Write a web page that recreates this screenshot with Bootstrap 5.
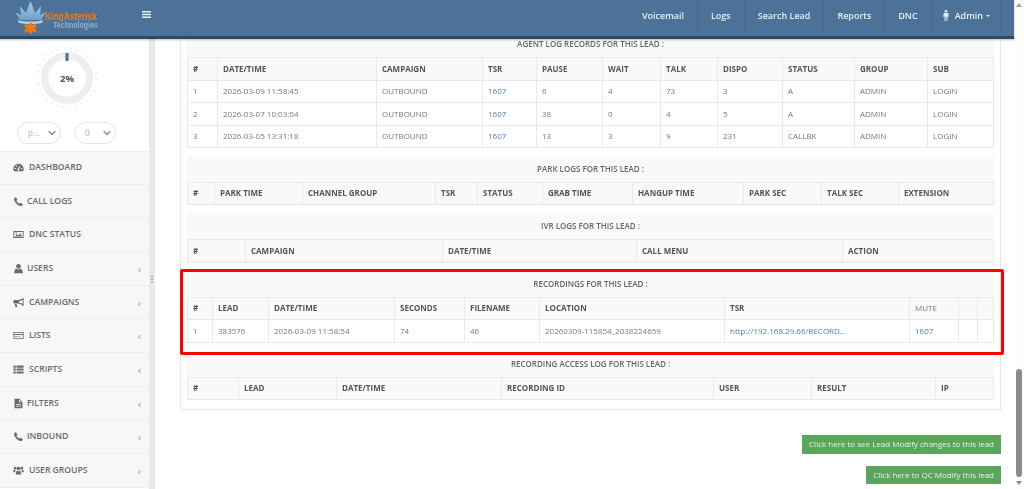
<!DOCTYPE html>
<html lang="en">
<head>
    <meta charset="UTF-8">
    <title>Lead Details</title>
    <link href="https://cdn.jsdelivr.net/npm/bootstrap@5.3.3/dist/css/bootstrap.min.css" rel="stylesheet">
    <style>
        html, body { height: 489px; overflow: hidden; }
        body { font-family: "Open Sans", "Liberation Sans", sans-serif; font-size: 8px; color: #777; background: #fff; }

        .app-shell { height: 489px; }
        .app-main { width: 1014px; }
        .app-scrollbar { width: 10px; background: #fdfdfd; }
        .scroll-up, .scroll-down { width: 0; height: 0; border-left: 3px solid transparent; border-right: 3px solid transparent; }
        .scroll-up { border-bottom: 4px solid #a0a0a0; margin-top: 3px; }
        .scroll-down { border-top: 4px solid #8a8a8a; margin-top: 4px; }
        .scroll-thumb { width: 6px; height: 108px; margin-top: 362px; background: #8c8c8c; border-radius: 3px; }

        .top-bar { height: 39px; padding: 0; background: #4c7299; border-bottom: 3px solid #2b4a60; box-shadow: 0 1px 2px rgba(0, 0, 0, .25); position: relative; z-index: 5; flex-wrap: nowrap; }
        .brand-box { width: 142px; height: 36px; }
        .menu-bars { width: 9px; height: 7px; margin-top: -8px; }
        .top-links { margin-right: 13px; height: 36px; align-items: flex-start; }
        .top-links .nav-link { height: 32px; padding: 0 13px; line-height: 32px; color: #e8edf2; font-size: 9px; font-weight: 600; border-right: 1px solid #466a8d; }
        .top-links .nav-link:hover { color: #fff; }
        .top-links .nav-item:last-child .nav-link { padding-right: 10px; }
        .top-links .dropdown-toggle::after { border-top-width: 2.5px; border-left-width: 2.5px; border-right-width: 2.5px; margin-left: 3px; }
        .man-icon { width: 6px; height: 11px; margin: 0 6px 0 -2px; vertical-align: -2px; }

        .side-panel { width: 149px; background: #fff; flex: none; }
        .gauge-box { width: 133px; }
        .gauge-svg { width: 70px; height: 70px; margin-top: 4px; }
        .pill-select { height: 22px; padding: 0 0 0 10px; font-family: "Liberation Serif", serif; font-size: 9.5px; color: #bbb; border: 1.5px solid #e6e6e6; border-radius: 11px; background-image: url("data:image/svg+xml,%3csvg xmlns='http://www.w3.org/2000/svg' viewBox='0 0 16 16'%3e%3cpath fill='none' stroke='%23888' stroke-width='2.5' stroke-linecap='round' stroke-linejoin='round' d='m2 5 6 6 6-6'/%3e%3c/svg%3e"); background-position: right 4px center; background-size: 8px 8px; min-height: 0; }
        .pill-a { width: 44px; }
        .pill-b { width: 42px; }
        .select-row { gap: 13px; margin-top: 9px; margin-bottom: 7px; }

        .side-menu { border-radius: 0; }
        .side-menu .list-group-item { height: 33.7px; padding: 0 8px 0 13px; background: #f7f7f7; border-color: #efefef; border-left: 0; border-right: 0; color: #6a6a6a; font-size: 8.6px; font-weight: 600; }
        .side-icon { width: 11px; height: 11px; fill: #6a6a6a; flex: none; }
        .side-label { margin-left: 5px; }
        .side-label.near-icon { margin-left: 3px; }
        .side-arrow { margin-left: auto; color: #999; font-size: 11px; font-weight: 400; line-height: 1; }

        .side-gutter { width: 6px; background: #e9e9e9; flex: none; padding-top: 236px; }
        .grip-dots { height: 8px; border-left: 2px dotted #b5b5b5; }

        .content-pane { padding: 0 13px 0 25px; overflow: hidden; will-change: transform; }
        .log-card { margin-top: -9px; padding: 0 6px 9px; border: 1px solid #e9e9e9; border-radius: 0; }
        .log-head { height: 26px; background: #f9f9f9; font-weight: 600; color: #666; }
        .log-block { margin-bottom: 8px; }
        .log-block:first-child { margin-bottom: 7.5px; }
        .log-block:last-child { margin-bottom: 0; }
        .log-table { table-layout: fixed; margin: 0; width: 100%; --bs-table-border-color: #e9e9e9; --bs-table-bg: #fff; --bs-table-color: #777; }
        .log-table th, .log-table td { padding: 0 5px; vertical-align: middle; font-size: 8px; white-space: nowrap; overflow: hidden; }
        .log-table th { height: 22.5px; background: #f9f9f9; --bs-table-bg: #f9f9f9; color: #555; font-weight: 700; }
        .log-table td { height: 22.5px; }
        .log-table a { color: #4d7fa8; text-decoration: none; }
        .log-table th.plain-head { font-weight: 400; color: #777; }

        #agent-log th:nth-child(1) { width: 30px; } #agent-log th:nth-child(2) { width: 159px; } #agent-log th:nth-child(3) { width: 106px; }
        #agent-log th:nth-child(4) { width: 54px; } #agent-log th:nth-child(5) { width: 66px; } #agent-log th:nth-child(6) { width: 58px; }
        #agent-log th:nth-child(7) { width: 57px; } #agent-log th:nth-child(8) { width: 65px; } #agent-log th:nth-child(9) { width: 72px; } #agent-log th:nth-child(10) { width: 73px; }

        #park-log th:nth-child(1) { width: 27px; } #park-log th:nth-child(2) { width: 88px; } #park-log th:nth-child(3) { width: 133px; }
        #park-log th:nth-child(4) { width: 42px; } #park-log th:nth-child(5) { width: 65px; } #park-log th:nth-child(6) { width: 90px; }
        #park-log th:nth-child(7) { width: 111px; } #park-log th:nth-child(8) { width: 78px; } #park-log th:nth-child(9) { width: 77px; }

        #ivr-log th:nth-child(1) { width: 58px; } #ivr-log th:nth-child(2) { width: 197px; } #ivr-log th:nth-child(3) { width: 194px; } #ivr-log th:nth-child(4) { width: 206px; }

        #rec-log th:nth-child(1) { width: 25px; } #rec-log th:nth-child(2) { width: 56px; } #rec-log th:nth-child(3) { width: 126px; } #rec-log th:nth-child(4) { width: 70px; }
        #rec-log th:nth-child(5) { width: 75px; } #rec-log th:nth-child(6) { width: 185px; } #rec-log th:nth-child(7) { width: 185px; } #rec-log th:nth-child(8) { width: 49px; } #rec-log th:nth-child(9) { width: 19px; }

        #access-log th:nth-child(1) { width: 51px; } #access-log th:nth-child(2) { width: 98px; } #access-log th:nth-child(3) { width: 165px; }
        #access-log th:nth-child(4) { width: 212px; } #access-log th:nth-child(5) { width: 98px; } #access-log th:nth-child(6) { width: 124px; }

        .rec-wrap { position: relative; }
        .red-frame { position: absolute; left: -7px; right: -10px; top: -2px; bottom: -12px; border: 3px solid #f00; border-radius: 2px; pointer-events: none; }

        .lead-btns { gap: 12px; margin-top: 25px; }
        .lead-btn { height: 18.5px; padding: 0 7px; font-size: 8px; line-height: 18px; color: #e6f3e6; background: #5aa65a; border: 0; border-radius: 0; }
    </style>
</head>
<body>

<svg width="0" height="0" class="position-absolute">
    <defs><linearGradient id="crown-fill" x1="0" y1="0" x2="0" y2="1"><stop offset="0" stop-color="#a9cfe8"/><stop offset="1" stop-color="#6f9fc6"/></linearGradient></defs>
    <symbol id="i-gauge" viewBox="0 0 14 14"><path fill-rule="evenodd" d="M7 2.2A6.6 6.6 0 0 0 .4 8.8c0 1.2.3 2.2.9 3.1h11.4c.6-.9.9-1.9.9-3.1A6.6 6.6 0 0 0 7 2.2zM3 9.2a1 1 0 1 1 0-2 1 1 0 0 1 0 2zm1.4-3.1a1 1 0 1 1 0-2 1 1 0 0 1 0 2zM7 11.1a1.5 1.5 0 0 1-.7-2.8l2-3.6.8.4-1.2 3.7A1.5 1.5 0 0 1 7 11.1zm4-1.9a1 1 0 1 1 0-2 1 1 0 0 1 0 2z"/></symbol>
    <symbol id="i-phone" viewBox="0 0 14 14"><path d="M3.6 1.6l2 3-1.2 1.5c.6 1.5 2 3 3.6 3.6l1.5-1.2 3 2c-.2 1.4-1.5 2.5-2.8 2.2C5.800 11.900 2.100 8.200 1.400 4.300 1.100 3 2.200 1.800 3.600 1.600z"/></symbol>
    <symbol id="i-image" viewBox="0 0 14 14"><path fill-rule="evenodd" d="M.5 2.500h13v9H.500zM1.700 3.700v6.600h10.600V3.700zM2.600 9.500l2.400-3 1.800 1.800 2.400-3 2.200 4.200zM4 6a1 1 0 1 1 0-2 1 1 0 0 1 0 2z"/></symbol>
    <symbol id="i-user" viewBox="0 0 14 14"><circle cx="7" cy="4.200" r="3"/><path d="M1.500 13c0-3.600 1.300-5.500 3-5.700.7.600 1.500.9 2.500.9s1.800-.3 2.500-.9c1.700.2 3 2.100 3 5.700z"/></symbol>
    <symbol id="i-horn" viewBox="0 0 14 14"><path fill-rule="evenodd" d="M13.500 1.500v9.500l-.8.300C11 9.500 9 8.500 6.500 8.200H1.500a1 1 0 0 1-1-1V4.800a1 1 0 0 1 1-1h5c2.500-.3 4.500-1.300 6.200-2.600zM12.300 3.400C10.900 4.300 9.200 5 7.500 5.200v1.800c1.700.2 3.400.9 4.800 1.800zM2.200 8.800h2.300l1 4.200H3.300z"/></symbol>
    <symbol id="i-card" viewBox="0 0 14 14"><path fill-rule="evenodd" d="M.5 2.500h13v9H.500zM1.500 3.500v1.500h11V3.500zM1.500 6.500v4h11v-4zM2.500 8h3v1h-3zM7 8h2v1H7z"/></symbol>
    <symbol id="i-rows" viewBox="0 0 14 14"><path d="M.5 2h3v2.700h-3zM4.500 2h9v2.700h-9zM.5 5.700h3v2.700h-3zM4.500 5.700h9v2.700h-9zM.5 9.400h3v2.700h-3zM4.500 9.400h9v2.700h-9z"/></symbol>
    <symbol id="i-file" viewBox="0 0 14 14"><path fill-rule="evenodd" d="M2 1h6l4 4v8H2zM7.500 2.300V5.500h3.200zM4 7.500v1h6v-1zM4 9.800v1h6v-1z"/></symbol>
    <symbol id="i-users" viewBox="0 0 14 14"><circle cx="7" cy="4.500" r="2.300"/><circle cx="2.800" cy="4" r="1.700"/><circle cx="11.200" cy="4" r="1.700"/><path d="M3.500 12c0-3 1-4.500 2-4.700.5.300 1 .5 1.500.5s1-.2 1.500-.5c1 .2 2 1.700 2 4.700zM.2 9.300c0-2 .7-3.200 1.400-3.300.4.300.8.400 1.300.4.200 0 .4 0 .6-.1-.5.800-.9 1.700-1 3zM13.800 9.300c0-2-.7-3.200-1.400-3.300-.4.300-.8.400-1.300.4-.2 0-.4 0-.6-.1.500.8.900 1.700 1 3z"/></symbol>
</svg>

<div class="app-shell d-flex">
    <div class="app-main d-flex flex-column">
        <nav class="navbar top-bar justify-content-between">
            <div class="d-flex align-items-center">
                <div class="brand-box">
                    <svg width="140" height="36" viewBox="0 0 140 36">
                        <path d="M15 12l6 3-1-9 6 7 4.500-12 4.500 12 6-7-1 9 6-3-5 8H20z" fill="url(#crown-fill)"/>
                        <path d="M18 20c5 2 20 2 25 0l-.5 2.500c-6 2-18 2-24 0z" fill="#b7d3e8"/>
                        <g stroke="#f07a14" stroke-width="3.200" stroke-linecap="butt">
                            <path d="M30.500 23v10.500M25 25l11 6.500M36 25l-11 6.500"/>
                        </g>
                        <text x="45" y="19.500" font-family="Liberation Sans, sans-serif" font-size="10.500" font-weight="700" fill="#ed7a1e" textLength="52" lengthAdjust="spacingAndGlyphs">KingAsterisk</text>
                        <text x="98" y="9.500" font-family="Liberation Sans, sans-serif" font-size="4" fill="#ed7a1e">®</text>
                        <text x="53" y="27.500" font-family="Liberation Sans, sans-serif" font-size="8.500" font-weight="700" fill="#8db0cd" textLength="45" lengthAdjust="spacingAndGlyphs">Technologies</text>
                    </svg>
                </div>
                <svg class="menu-bars" viewBox="0 0 9 8" fill="#e8edf2" preserveAspectRatio="none"><path d="M0 0h9v1.800H0zM0 3.100h9v1.800H0zM0 6.200h9V8H0z"/></svg>
            </div>
            <ul class="navbar-nav flex-row top-links">
                <li class="nav-item"><a class="nav-link" href="#">Voicemail</a></li>
                <li class="nav-item"><a class="nav-link" href="#">Logs</a></li>
                <li class="nav-item"><a class="nav-link" href="#">Search Lead</a></li>
                <li class="nav-item"><a class="nav-link" href="#">Reports</a></li>
                <li class="nav-item"><a class="nav-link" href="#">DNC</a></li>
                <li class="nav-item"><a class="nav-link dropdown-toggle" href="#"><svg class="man-icon" viewBox="0 0 6 11" fill="#e8edf2"><circle cx="3" cy="1.300" r="1.300"/><path d="M1 3h4l1 3.500-1 .3-.5-1.500V11h-1V7.500h-1V11h-1V5.300L1 6.800 0 6.500z"/></svg>Admin</a></li>
            </ul>
        </nav>

        <div class="d-flex flex-grow-1 overflow-hidden">
            <aside class="side-panel">
                <div class="gauge-box d-flex flex-column align-items-center">
                    <svg class="gauge-svg" viewBox="0 0 70 70">
                        <circle cx="35" cy="35" r="29.500" fill="none" stroke="#e2e2e2" stroke-width="2" stroke-dasharray="1 5.180"/>
                        <circle cx="35" cy="35" r="22.300" fill="none" stroke="#eeeeee" stroke-width="7.300"/>
                        <path d="M35 10v8" stroke="#4c7299" stroke-width="3"/>
                        <text x="35" y="38.500" text-anchor="middle" font-family="Open Sans, sans-serif" font-size="9.500" font-weight="700" fill="#555">2%</text>
                    </svg>
                    <div class="d-flex select-row">
                        <select class="form-select pill-select pill-a"><option>p...</option></select>
                        <select class="form-select pill-select pill-b"><option>0</option></select>
                    </div>
                </div>
                <div class="list-group side-menu">
                    <a href="#" class="list-group-item d-flex align-items-center"><svg class="side-icon"><use href="#i-gauge"/></svg><span class="side-label">DASHBOARD</span></a>
                    <a href="#" class="list-group-item d-flex align-items-center"><svg class="side-icon"><use href="#i-phone"/></svg><span class="side-label near-icon">CALL LOGS</span></a>
                    <a href="#" class="list-group-item d-flex align-items-center"><svg class="side-icon"><use href="#i-image"/></svg><span class="side-label">DNC STATUS</span></a>
                    <a href="#" class="list-group-item d-flex align-items-center"><svg class="side-icon"><use href="#i-user"/></svg><span class="side-label near-icon">USERS</span><span class="side-arrow">‹</span></a>
                    <a href="#" class="list-group-item d-flex align-items-center"><svg class="side-icon"><use href="#i-horn"/></svg><span class="side-label">CAMPAIGNS</span><span class="side-arrow">‹</span></a>
                    <a href="#" class="list-group-item d-flex align-items-center"><svg class="side-icon"><use href="#i-card"/></svg><span class="side-label">LISTS</span><span class="side-arrow">‹</span></a>
                    <a href="#" class="list-group-item d-flex align-items-center"><svg class="side-icon"><use href="#i-rows"/></svg><span class="side-label">SCRIPTS</span><span class="side-arrow">‹</span></a>
                    <a href="#" class="list-group-item d-flex align-items-center"><svg class="side-icon"><use href="#i-file"/></svg><span class="side-label near-icon">FILTERS</span><span class="side-arrow">‹</span></a>
                    <a href="#" class="list-group-item d-flex align-items-center"><svg class="side-icon"><use href="#i-phone"/></svg><span class="side-label near-icon">INBOUND</span><span class="side-arrow">‹</span></a>
                    <a href="#" class="list-group-item d-flex align-items-center"><svg class="side-icon"><use href="#i-users"/></svg><span class="side-label">USER GROUPS</span><span class="side-arrow">‹</span></a>
                </div>
            </aside>
            <div class="side-gutter d-flex justify-content-center align-items-start"><div class="grip-dots"></div></div>

            <main class="content-pane flex-grow-1">
                <div class="log-card">
                    <div class="log-block">
                        <div class="log-head d-flex align-items-center justify-content-center">AGENT LOG RECORDS FOR THIS LEAD :</div>
                        <table class="table table-bordered log-table" id="agent-log">
                            <thead><tr><th>#</th><th>DATE/TIME</th><th>CAMPAIGN</th><th>TSR</th><th>PAUSE</th><th>WAIT</th><th>TALK</th><th>DISPO</th><th>STATUS</th><th>GROUP</th><th>SUB</th></tr></thead>
                            <tbody>
                                <tr><td>1</td><td>2026-03-09 11:58:45</td><td>OUTBOUND</td><td><a href="#">1607</a></td><td>6</td><td>4</td><td>73</td><td>3</td><td>A</td><td>ADMIN</td><td>LOGIN</td></tr>
                                <tr><td>2</td><td>2026-03-07 10:03:04</td><td>OUTBOUND</td><td><a href="#">1607</a></td><td>38</td><td>0</td><td>4</td><td>5</td><td>A</td><td>ADMIN</td><td>LOGIN</td></tr>
                                <tr><td>3</td><td>2026-03-05 13:31:18</td><td>OUTBOUND</td><td><a href="#">1607</a></td><td>13</td><td>3</td><td>9</td><td>231</td><td>CALLBK</td><td>ADMIN</td><td>LOGIN</td></tr>
                            </tbody>
                        </table>
                    </div>
                    <div class="log-block">
                        <div class="log-head d-flex align-items-center justify-content-center">PARK LOGS FOR THIS LEAD :</div>
                        <table class="table table-bordered log-table" id="park-log">
                            <thead><tr><th>#</th><th>PARK TIME</th><th>CHANNEL GROUP</th><th>TSR</th><th>STATUS</th><th>GRAB TIME</th><th>HANGUP TIME</th><th>PARK SEC</th><th>TALK SEC</th><th>EXTENSION</th></tr></thead>
                        </table>
                    </div>
                    <div class="log-block">
                        <div class="log-head d-flex align-items-center justify-content-center">IVR LOGS FOR THIS LEAD :</div>
                        <table class="table table-bordered log-table" id="ivr-log">
                            <thead><tr><th>#</th><th>CAMPAIGN</th><th>DATE/TIME</th><th>CALL MENU</th><th>ACTION</th></tr></thead>
                        </table>
                    </div>
                    <div class="log-block rec-wrap">
                        <div class="log-head d-flex align-items-center justify-content-center">RECORDINGS FOR THIS LEAD :</div>
                        <table class="table table-bordered log-table" id="rec-log">
                            <thead><tr><th>#</th><th>LEAD</th><th>DATE/TIME</th><th>SECONDS</th><th>FILENAME</th><th>LOCATION</th><th>TSR</th><th class="plain-head">MUTE</th><th></th><th></th></tr></thead>
                            <tbody>
                                <tr><td>1</td><td>383576</td><td>2026-03-09 11:58:54</td><td>74</td><td>46</td><td>20260309-115854_2038224659</td><td><a href="#">http://192.168.29.66/RECORD...</a></td><td><a href="#">1607</a></td><td></td><td></td></tr>
                            </tbody>
                        </table>
                        <div class="red-frame"></div>
                    </div>
                    <div class="log-block">
                        <div class="log-head d-flex align-items-center justify-content-center">RECORDING ACCESS LOG FOR THIS LEAD :</div>
                        <table class="table table-bordered log-table" id="access-log">
                            <thead><tr><th>#</th><th>LEAD</th><th>DATE/TIME</th><th>RECORDING ID</th><th>USER</th><th>RESULT</th><th>IP</th></tr></thead>
                        </table>
                    </div>
                </div>
                <div class="d-flex flex-column align-items-end lead-btns">
                    <button type="button" class="btn lead-btn">Click here to see Lead Modify changes to this lead</button>
                    <button type="button" class="btn lead-btn">Click here to QC Modify this lead</button>
                </div>
            </main>
        </div>
    </div>
    <div class="app-scrollbar d-flex flex-column align-items-center">
        <div class="scroll-up"></div>
        <div class="scroll-thumb"></div>
        <div class="scroll-down"></div>
    </div>
</div>

<script src="https://cdn.jsdelivr.net/npm/bootstrap@5.3.3/dist/js/bootstrap.bundle.min.js"></script>
</body>
</html>
